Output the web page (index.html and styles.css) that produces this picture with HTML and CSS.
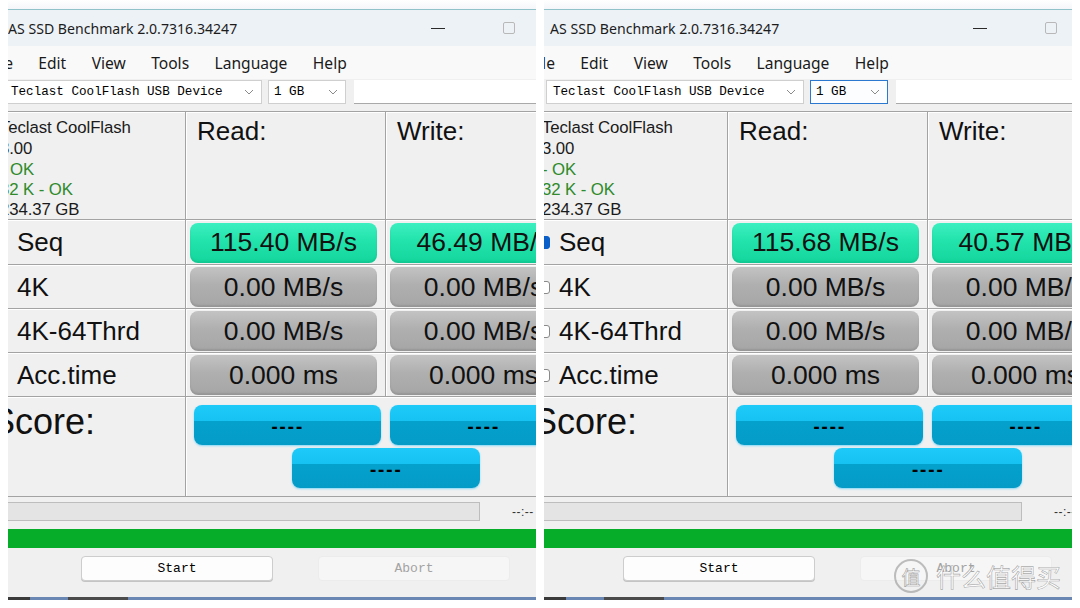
FILE: index.html
```html
<!DOCTYPE html>
<html lang="en">
<head>
<meta charset="utf-8">
<title>AS SSD Benchmark</title>
<link rel="stylesheet" href="styles.css">
</head>
<body>
<div class="page">
  <section class="panel panel-left">
    <div class="topstrip"></div>
    <div class="win">
      <header class="titlebar">
        <span class="title">AS SSD Benchmark 2.0.7316.34247</span>
        <span class="wbtn min"></span>
        <span class="wbtn max"></span>
      </header>
      <nav class="menubar"><span>File</span><span>Edit</span><span>View</span><span>Tools</span><span>Language</span><span>Help</span></nav>
      <div class="selects">
        <div class="combo device"><span>Teclast CoolFlash USB Device</span><svg class="chev" width="10" height="6" viewBox="0 0 10 6"><path d="M1 1l4 4 4-4" fill="none" stroke="#8a8a8a" stroke-width="1"/></svg></div>
        <div class="combo size"><span>1 GB</span><svg class="chev" width="10" height="6" viewBox="0 0 10 6"><path d="M1 1l4 4 4-4" fill="none" stroke="#8a8a8a" stroke-width="1"/></svg></div>
        <div class="textbox"></div>
      </div>
      <div class="results">
        <div class="cell info"><p>Teclast CoolFlash</p><p>3.00</p><p class="ok">- OK</p><p class="ok">32 K - OK</p><p>234.37 GB</p></div>
        <div class="cell head">Read:</div>
        <div class="cell head">Write:</div>
        <div class="cell label"><span class="chk checked"></span>Seq</div>
        <div class="cell val"><div class="pill green">115.40 MB/s</div></div>
        <div class="cell val"><div class="pill green">46.49 MB/s</div></div>
        <div class="cell label"><span class="chk"></span>4K</div>
        <div class="cell val"><div class="pill gray">0.00 MB/s</div></div>
        <div class="cell val"><div class="pill gray">0.00 MB/s</div></div>
        <div class="cell label"><span class="chk"></span>4K-64Thrd</div>
        <div class="cell val"><div class="pill gray">0.00 MB/s</div></div>
        <div class="cell val"><div class="pill gray">0.00 MB/s</div></div>
        <div class="cell label"><span class="chk"></span>Acc.time</div>
        <div class="cell val"><div class="pill gray">0.000 ms</div></div>
        <div class="cell val"><div class="pill gray">0.000 ms</div></div>
      </div>
      <div class="scores">
        <div class="score-label">Score:</div>
        <div class="score-pills">
          <div class="spill">----</div>
          <div class="spill">----</div>
          <div class="spill total">----</div>
        </div>
      </div>
      <div class="progress"><div class="bar"></div><span class="eta">--:--</span></div>
      <div class="greenbar"></div>
      <div class="actions"><button class="btn">Start</button><button class="btn disabled">Abort</button></div>
    </div>
    <div class="taskbar"></div>
  </section>

  <section class="panel panel-right">
    <div class="topstrip"></div>
    <div class="win">
      <header class="titlebar">
        <span class="title">AS SSD Benchmark 2.0.7316.34247</span>
        <span class="wbtn min"></span>
        <span class="wbtn max"></span>
      </header>
      <nav class="menubar"><span>File</span><span>Edit</span><span>View</span><span>Tools</span><span>Language</span><span>Help</span></nav>
      <div class="selects">
        <div class="combo device"><span>Teclast CoolFlash USB Device</span><svg class="chev" width="10" height="6" viewBox="0 0 10 6"><path d="M1 1l4 4 4-4" fill="none" stroke="#8a8a8a" stroke-width="1"/></svg></div>
        <div class="combo size focused"><span>1 GB</span><svg class="chev" width="10" height="6" viewBox="0 0 10 6"><path d="M1 1l4 4 4-4" fill="none" stroke="#8a8a8a" stroke-width="1"/></svg></div>
        <div class="textbox"></div>
      </div>
      <div class="results">
        <div class="cell info"><p>Teclast CoolFlash</p><p>3.00</p><p class="ok">- OK</p><p class="ok">32 K - OK</p><p>234.37 GB</p></div>
        <div class="cell head">Read:</div>
        <div class="cell head">Write:</div>
        <div class="cell label"><span class="chk checked"></span>Seq</div>
        <div class="cell val"><div class="pill green">115.68 MB/s</div></div>
        <div class="cell val"><div class="pill green">40.57 MB/s</div></div>
        <div class="cell label"><span class="chk"></span>4K</div>
        <div class="cell val"><div class="pill gray">0.00 MB/s</div></div>
        <div class="cell val"><div class="pill gray">0.00 MB/s</div></div>
        <div class="cell label"><span class="chk"></span>4K-64Thrd</div>
        <div class="cell val"><div class="pill gray">0.00 MB/s</div></div>
        <div class="cell val"><div class="pill gray">0.00 MB/s</div></div>
        <div class="cell label"><span class="chk"></span>Acc.time</div>
        <div class="cell val"><div class="pill gray">0.000 ms</div></div>
        <div class="cell val"><div class="pill gray">0.000 ms</div></div>
      </div>
      <div class="scores">
        <div class="score-label">Score:</div>
        <div class="score-pills">
          <div class="spill">----</div>
          <div class="spill">----</div>
          <div class="spill total">----</div>
        </div>
      </div>
      <div class="progress"><div class="bar"></div><span class="eta">--:--</span></div>
      <div class="greenbar"></div>
      <div class="actions"><button class="btn">Start</button><button class="btn disabled">Abort</button></div>
    </div>
    <div class="taskbar"></div>
    <div class="watermark"><span class="wm-logo">值</span><span class="wm-text">什么值得买</span></div>
  </section>
</div>
</body>
</html>
```

FILE: styles.css
```css
* { box-sizing: border-box; }
html, body { margin: 0; padding: 0; background: #ffffff; }
body { width: 1080px; height: 608px; overflow: hidden; font-family: "Liberation Sans", Arial, sans-serif; color: #111; }

.page { display: flex; gap: 8px; padding-left: 8px; height: 608px; }

.panel { position: relative; width: 528px; height: 608px; overflow: hidden; display: flex; flex-direction: column; background: #ffffff; }

.topstrip { flex: none; height: 9px; background: linear-gradient(#ffffff, #f4f6f9); }

.win { flex: none; width: 640px; height: 588px; margin-left: -30px; background: #f0f0f0; display: flex; flex-direction: column; }
.panel-right .win { margin-left: -24px; }

/* title bar */
.titlebar { flex: none; height: 37px; display: flex; align-items: center; padding-left: 30px; background: #edf2f6; border-top: 1px solid #8fc3c9; font-family: "Noto Sans", "Open Sans", sans-serif; font-size: 14.1px; color: #1c1c1c; }
.title { flex: 0 0 423px; white-space: nowrap; }
.wbtn { flex: none; display: block; }
.wbtn.min { width: 14px; height: 1px; background: #2a2a2a; }
.wbtn.max { width: 12px; height: 12px; margin-left: 58px; border: 1px solid #b8b8b8; border-radius: 2px; }

/* menu bar */
.menubar { flex: none; height: 33px; display: flex; align-items: center; gap: 25.4px; padding-left: 10px; background: #f9f9f9; font-family: "Noto Sans", "Open Sans", sans-serif; font-size: 15.6px; color: #1a1a1a; }

/* selects row */
.selects { flex: none; height: 32px; display: flex; gap: 6px; padding-left: 26px; padding-top: 1px; }
.combo { height: 24px; display: flex; align-items: center; justify-content: space-between; background: #ffffff; border: 1px solid #cfcfcf; font-family: "Liberation Mono", "Courier New", monospace; font-size: 12.6px; color: #000; }
.combo.device { width: 258px; padding: 0 7px 0 6px; }
.combo.size { width: 78px; padding: 0 7px 0 5px; }
.combo.focused { border-color: #2a78cf; background: #fbfdff; }
.chev { display: block; }
.textbox { width: 264px; height: 24px; margin-left: 2px; background: #ffffff; border-bottom: 1px solid #a9a9a9; }

/* results grid */
.results { flex: none; display: grid; width: 608px; grid-template-columns: 207px 199px 200px; grid-template-rows: 107px 44px 43px 43px 43px; gap: 1px; background: #a3a3a3; border-top: 1px solid #a3a3a3; border-bottom: 1px solid #a3a3a3; }
.cell { background: #f0f0f0; border-top: 1px solid #ffffff; border-left: 1px solid #ffffff; }
.info { padding: 5px 0 0 21px; font-size: 16.8px; line-height: 20px; color: #1a1a1a; white-space: nowrap; letter-spacing: -0.1px; }
.info p { margin: 0; }
.info p:nth-child(2) { line-height: 22px; }
.info .ok { color: #2e8a2a; }
.head { padding: 3px 0 0 10px; font-size: 26px; line-height: 30px; color: #111; }
.label { display: flex; align-items: center; padding-left: 16px; gap: 9px; font-size: 26px; color: #111; }
.chk { width: 13px; height: 13px; border: 1px solid #8a8a8a; border-radius: 3px; background: #fff; flex: none; }
.chk.checked { background: #0a5fc8; border-color: #0a5fc8; }
.val { display: flex; align-items: center; padding-left: 3px; }
.pill { width: 187px; height: 40px; border-radius: 8px; display: flex; align-items: center; justify-content: center; font-size: 26.5px; color: #111; white-space: nowrap; }
.pill.green { background: linear-gradient(#3cefc0 0%, #22e3ab 45%, #13d69d 100%); box-shadow: inset 0 -2px 2px rgba(0, 90, 60, 0.12); }
.pill.gray { background: linear-gradient(#c3c3c3 0%, #afafaf 45%, #a6a6a6 100%); box-shadow: inset 0 -2px 2px rgba(0, 0, 0, 0.1); }

/* score section */
.scores { flex: none; width: 640px; height: 100px; display: grid; grid-template-columns: 207px 1fr; column-gap: 1px; background: #a3a3a3; border-bottom: 1px solid #a3a3a3; }
.score-label { background: #f0f0f0; border-top: 1px solid #fff; padding: 4px 0 0 13px; font-size: 36px; line-height: 40px; color: #111; }
.score-pills { background: #f0f0f0; border-top: 1px solid #fff; border-left: 1px solid #fff; display: grid; grid-template-columns: 187px 187px; column-gap: 9px; row-gap: 3px; align-content: start; padding: 7px 0 0 7px; }
.spill { height: 40px; border-radius: 8px; display: flex; justify-content: center; padding-top: 13px; font-family: "DejaVu Sans", sans-serif; font-weight: bold; font-size: 16px; line-height: 18px; letter-spacing: 1.5px; color: #000; background: linear-gradient(#1ecaf8 0%, #15c2f2 40%, #05a1cd 41%, #049bc7 100%); box-shadow: 0 1px 2px rgba(60, 200, 255, 0.6); }
.spill.total { grid-column: 1 / span 2; width: 188px; margin-left: 98px; }

/* progress */
.progress { flex: none; height: 31px; display: flex; align-items: flex-start; padding: 5px 0 0 10px; }
.bar { width: 492px; height: 19px; background: #e4e4e4; border: 1px solid #bdbdbd; }
.eta { margin-left: 32px; padding-top: 3px; font-size: 12px; color: #333; letter-spacing: 0.5px; }

.greenbar { flex: none; height: 19px; margin-top: 1px; background: #06ad29; }

.actions { flex: none; display: flex; gap: 45px; padding: 8px 0 0 103px; }
.btn { width: 192px; height: 25px; border-radius: 4px; border: 1px solid #cdcdcd; background: #fdfdfd; font-family: "Liberation Mono", "Courier New", monospace; font-size: 13px; color: #000; padding: 0; box-shadow: 0 1px 0 #c4c4c4; }
.btn.disabled { background: #f6f6f6; border-color: #ececec; color: #a3a3a3; box-shadow: none; }

.taskbar { flex: none; height: 3px; background: linear-gradient(90deg, #3a3a3a 0, #3a3a3a 22px, #6a87b4 22px, #6a87b4 60px, #4b4b4b 60px, #4b4b4b 120px, #6a87b4 120px); }

/* watermark overlay */
.watermark { position: absolute; left: 350px; top: 558px; display: flex; align-items: center; gap: 8px; pointer-events: none; }
.wm-logo { width: 34px; height: 34px; border-radius: 50%; border: 2px solid rgba(140, 140, 140, 0.55); display: flex; align-items: center; justify-content: center; font-family: "Noto Sans CJK SC", sans-serif; font-size: 19px; color: rgba(255, 255, 255, 0.9); -webkit-text-stroke: 0.6px rgba(120, 120, 120, 0.7); }
.wm-text { font-family: "Noto Sans CJK SC", sans-serif; font-size: 25px; color: rgba(255, 255, 255, 0.88); -webkit-text-stroke: 0.6px rgba(120, 120, 120, 0.65); }
```
